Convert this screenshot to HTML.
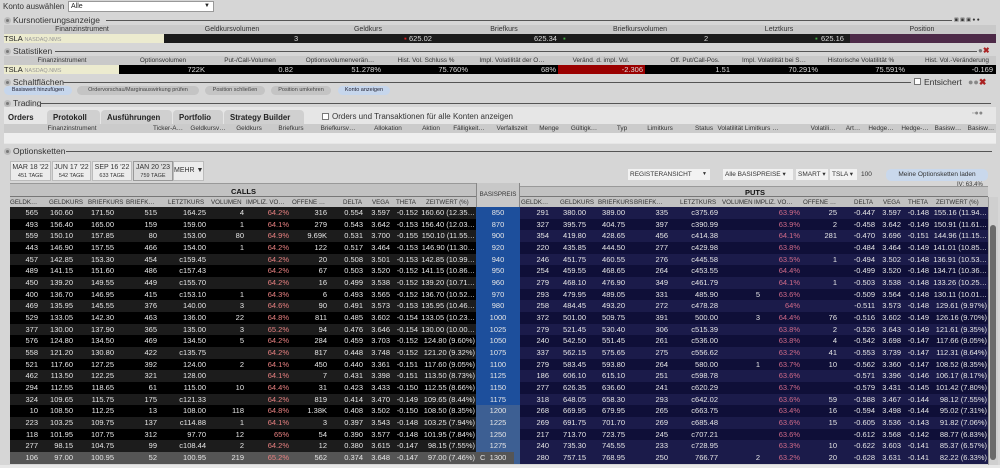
<!DOCTYPE html><html><head><meta charset="utf-8"><style>
*{margin:0;padding:0;box-sizing:border-box}
body{width:1000px;height:468px;overflow:hidden;background:#d6d6d6;font-family:"Liberation Sans",sans-serif;font-size:8px;color:#222;position:relative}
.a{position:absolute;white-space:nowrap}
.t{position:absolute;font-size:8.5px;color:#333;white-space:nowrap}
.t b{display:inline-block;width:7px;height:7px;border-radius:50%;background:#777;border:2px solid #bbb;vertical-align:-1px;margin-right:2px}
.ln{position:absolute;height:1px;background:#555}
.hd{position:absolute;background:#c9c9c9;height:9px;left:4px;width:992px}
.hd span{position:absolute;transform:translateX(-50%);top:0;line-height:9px;color:#333;font-size:7px;white-space:nowrap}
.hd.sm span{font-size:6.4px}
.btn{position:absolute;top:86px;height:9px;border-radius:5px;font-size:5.5px;line-height:9px;text-align:center;color:#444;background:#c4c4c4;white-space:nowrap}
.btn.bl{background:#c6d6ec;color:#223}
.tab{position:absolute;top:110px;height:15px;line-height:15px;font-weight:bold;font-size:7.8px;color:#222;background:#d0d0d0;border-radius:4px 4px 0 0;padding-left:6px;white-space:nowrap}
.et{position:absolute;top:161px;height:20px;background:#ececec;border:1px solid #bbb;text-align:center;font-size:7px;line-height:9px;padding-top:1px;color:#333;white-space:nowrap}
.et i{font-style:normal;font-size:5.5px;display:block;line-height:8px}
#rows{position:absolute;left:10px;top:207px;width:978px}
.r{position:relative;height:11.68px;line-height:11.68px;color:#e6e6e6;font-size:7.5px;background:linear-gradient(to right,#000 0 466px,#1d4f9c 466px 510px,#0f0f38 510px)}
.r.e{background:linear-gradient(to right,#1c1c1c 0 466px,#1d4f9c 466px 510px,#1b1b4a 510px)}
.r.m{background:linear-gradient(to right,#000 0 466px,#3d5f93 466px 510px,#0f0f38 510px)}
.r.m.e{background:linear-gradient(to right,#1c1c1c 0 466px,#3d5f93 466px 510px,#1b1b4a 510px)}
.r.z{background:linear-gradient(to right,#555 0 504px,#3d5f93 504px 510px,#1b1b4a 510px)}
.r span{position:absolute;top:0;text-align:right;overflow:hidden;white-space:nowrap}
.r .s{left:466px;width:44px;text-align:center}
.r .q{color:#e88080}.r .p7{color:#d06a88}
.c1{left:-2px;width:30px}.c2{left:35px;width:28px}.c3{left:70px;width:34px}.c4{left:115px;width:32px}.c5{left:158px;width:38px}.c6{left:205px;width:29px}.c7{left:245px;width:34px}.c8{left:285px;width:32px}.c9{left:325px;width:28px}.c10{left:355px;width:25px}.c11{left:382px;width:26px}.c12{left:409px;width:56px}
.p1{left:515px;width:24px}.p2{left:545px;width:31px}.p3{left:580px;width:35px}.p4{left:630px;width:28px}.p5{left:670px;width:38px}.p6{left:720px;width:30px}.p7{left:760px;width:30px}.p8{left:795px;width:32px}.p9{left:830px;width:35px}.p10{left:867px;width:24px}.p11{left:893px;width:26px}.p12{left:921px;width:56px}
.ch span{position:absolute;top:199px;font-size:6.2px;color:#333;white-space:nowrap;line-height:8px}
</style></head><body>
<div class="a" style="left:3px;top:2px;font-size:8px;color:#333">Konto auswählen</div>
<div class="a" style="left:68px;top:1px;width:146px;height:11px;background:#fff;border:1px solid #999;font-size:7px;line-height:9px;padding-left:2px">Alle<span style="position:absolute;right:3px;font-size:6px">▼</span></div>

<div class="t" style="left:4px;top:15px"><b></b>Kursnotierungsanzeige</div>
<div class="ln" style="left:106px;top:20px;width:846px"></div>
<div class="a" style="left:954px;top:17px;width:42px;height:6px;font-size:5px;color:#333">▣ ▣ ▣ ● ●</div>
<div class="hd" style="top:25px"><span style="left:78px">Finanzinstrument</span><span style="left:228px">Geldkursvolumen</span><span style="left:364px">Geldkurs</span><span style="left:500px">Briefkurs</span><span style="left:636px">Briefkursvolumen</span><span style="left:775px">Letztkurs</span><span style="left:918px">Position</span></div>
<div class="a" style="left:4px;top:34px;width:160px;height:9px;background:#ecebcf;font-size:7.5px;line-height:9px;color:#222">TSLA <span style="font-size:5.5px;color:#999">NASDAQ.NMS</span></div>
<div class="a" style="left:164px;top:34px;width:686px;height:9px;background:#1b1b1b;color:#ddd;line-height:9px;font-size:7.5px">
<span class="a" style="left:130px">3</span><span class="a" style="left:240px;color:#d22">▪</span><span class="a" style="left:245px">625.02</span><span class="a" style="left:370px">625.34</span><span class="a" style="left:399px;color:#4a4">▪</span><span class="a" style="left:540px">2</span><span class="a" style="left:651px;color:#4a4">▪</span><span class="a" style="left:657px">625.16</span></div>
<div class="a" style="left:850px;top:34px;width:146px;height:9px;background:#4d2a48"></div>

<div class="t" style="left:4px;top:46px"><b></b>Statistiken</div>
<div class="ln" style="left:55px;top:51px;width:922px"></div>
<div class="a" style="left:978px;top:46px;font-size:8px;color:#777">●<span style="color:#a22;font-weight:bold">✖</span></div>
<div class="hd sm" style="top:56px"><span style="left:58px">Finanzinstrument</span><span style="left:159px">Optionsvolumen</span><span style="left:246px">Put-/Call-Volumen</span><span style="left:336px">Optionsvolumenverän…</span><span style="left:422px">Hist. Vol. Schluss %</span><span style="left:508px">Impl. Volatilität der O…</span><span style="left:597px">Veränd. d. impl. Vol.</span><span style="left:691px">Off. Put/Call-Pos.</span><span style="left:770px">Impl. Volatilität bei S…</span><span style="left:857px">Historische Volatilität %</span><span style="left:953px">Hist. Vol.-Veränderung</span></div>
<div class="a" style="left:4px;top:65px;width:115px;height:9px;background:#ecebcf;line-height:9px;font-size:7.5px">TSLA <span style="font-size:5.5px;color:#999">NASDAQ.NMS</span></div>
<div class="a" style="left:119px;top:65px;width:877px;height:9px;background:#000;color:#ddd;line-height:9px;font-size:7.5px">
<span class="a" style="right:791px">722K</span><span class="a" style="right:703px">0.82</span><span class="a" style="right:615px">51.278%</span><span class="a" style="right:528px">75.760%</span><span class="a" style="right:440px">68%</span><span class="a" style="left:439px;width:87px;height:9px;background:#9a0000;text-align:right;padding-right:2px">-2.306</span><span class="a" style="right:266px">1.51</span><span class="a" style="right:178px">70.291%</span><span class="a" style="right:91px">75.591%</span><span class="a" style="right:3px">-0.169</span></div>

<div class="t" style="left:4px;top:77px"><b></b>Schaltflächen</div>
<div class="ln" style="left:63px;top:82px;width:848px"></div>
<div class="a" style="left:914px;top:78px;width:7px;height:7px;background:#fff;border:1px solid #777"></div>
<div class="a" style="left:924px;top:77px;font-size:8.5px;color:#333">Entsichert</div>
<div class="a" style="left:968px;top:77px;font-size:9px;color:#888">●●<span style="color:#a22;font-weight:bold">✖</span></div>
<div class="btn bl" style="left:4px;width:68px">Basiswert hinzufügen</div>
<div class="btn" style="left:77px;width:122px">Ordervorschau/Marginauswirkung prüfen</div>
<div class="btn" style="left:205px;width:60px">Position schließen</div>
<div class="btn" style="left:271px;width:60px">Position umkehren</div>
<div class="btn bl" style="left:338px;width:52px">Konto anzeigen</div>

<div class="t" style="left:4px;top:98px"><b></b>Trading</div>
<div class="ln" style="left:41px;top:103px;width:950px"></div>
<div class="a" style="left:4px;top:107px;width:992px;height:37px;background:#e6e6e6"></div>
<div class="tab" style="left:6px;width:40px;background:#e6e6e6;padding-left:2px">Orders</div>
<div class="tab" style="left:47px;width:53px">Protokoll</div>
<div class="tab" style="left:101px;width:71px">Ausführungen</div>
<div class="tab" style="left:173px;width:50px">Portfolio</div>
<div class="tab" style="left:224px;width:80px">Strategy Builder</div>
<div class="a" style="left:322px;top:113px;width:7px;height:7px;background:#fff;border:1px solid #777"></div>
<div class="a" style="left:332px;top:112px;font-size:8px;color:#333">Orders und Transaktionen für alle Konten anzeigen</div>
<div class="a" style="left:972px;top:110px;font-size:7px;color:#888">▫●●</div>
<div class="hd sm" style="top:124px;background:#cbcbcb"><span style="left:68px">Finanzinstrument</span><span style="left:164px">Ticker-A…</span><span style="left:204px">Geldkursv…</span><span style="left:245px">Geldkurs</span><span style="left:287px">Briefkurs</span><span style="left:334px">Briefkursv…</span><span style="left:384px">Allokation</span><span style="left:427px">Aktion</span><span style="left:465px">Fälligkeit…</span><span style="left:508px">Verfallszeit</span><span style="left:545px">Menge</span><span style="left:580px">Gültigk…</span><span style="left:618px">Typ</span><span style="left:656px">Limitkurs</span><span style="left:700px">Status</span><span style="left:744px">Volatilität Limitkurs …</span><span style="left:819px">Volatili…</span><span style="left:849px">Art…</span><span style="left:877px">Hedge…</span><span style="left:911px">Hedge-…</span><span style="left:944px">Basisw…</span><span style="left:977px">Basisw…</span></div>
<div class="a" style="left:4px;top:133px;width:992px;height:10px;background:#eeeeee"></div>

<div class="t" style="left:4px;top:146px"><b></b>Optionsketten</div>
<div class="ln" style="left:66px;top:151px;width:926px"></div>
<div class="et" style="left:10px;width:41px">MAR 18 '22<i>451 TAGE</i></div>
<div class="et" style="left:52px;width:39px">JUN 17 '22<i>542 TAGE</i></div>
<div class="et" style="left:92px;width:40px">SEP 16 '22<i>633 TAGE</i></div>
<div class="et" style="left:133px;width:40px;background:#dcdcdc;border-color:#999">JAN 20 '23<i>759 TAGE</i></div>
<div class="et" style="left:173px;width:31px;line-height:18px;padding:0">MEHR ▼</div>
<div class="a" style="left:628px;top:169px;width:82px;height:11px;background:#f2f2f2;font-size:6.5px;line-height:11px;padding-left:2px;color:#333">REGISTERANSICHT<span style="position:absolute;right:3px;font-size:5px">▼</span></div>
<div class="a" style="left:723px;top:169px;width:70px;height:11px;background:#f2f2f2;font-size:6.5px;line-height:11px;padding-left:2px;color:#333">Alle BASISPREISE ▾</div>
<div class="a" style="left:796px;top:169px;width:32px;height:11px;background:#f2f2f2;font-size:6.5px;line-height:11px;padding-left:2px;color:#333">SMART ▾</div>
<div class="a" style="left:830px;top:169px;width:27px;height:11px;background:#f2f2f2;font-size:6.5px;line-height:11px;padding-left:2px;color:#333">TSLA ▾</div>
<div class="a" style="left:861px;top:169px;font-size:6.5px;line-height:11px;color:#333">100</div>
<div class="a" style="left:886px;top:169px;width:102px;height:12px;background:#c9d8ec;border-radius:5px;font-size:6.5px;line-height:12px;text-align:center;color:#333">Meine Optionsketten laden</div>
<div class="a" style="left:957px;top:182px;font-size:6px;color:#333">IV: 63.4%</div>

<div class="a" style="left:10px;top:183px;width:466px;height:24px;background:#c2c2c2;border-top:1px solid #999"></div>
<div class="a" style="left:10px;top:196px;width:466px;height:1px;background:#777"></div>
<div class="a" style="left:520px;top:186px;width:468px;height:21px;background:#c2c2c2;border-top:1px solid #999"></div>
<div class="a" style="left:520px;top:196px;width:468px;height:1px;background:#777"></div>
<div class="a" style="left:476px;top:183px;width:44px;height:24px;background:#c8c8c8;border-left:1px solid #888;border-right:1px solid #888;font-size:6.2px;line-height:24px;text-align:center;color:#333">BASISPREIS</div>
<div class="a" style="left:231px;top:187px;font-weight:bold;font-size:7.5px;color:#111">CALLS</div>
<div class="a" style="left:745px;top:188px;font-weight:bold;font-size:7.5px;color:#111">PUTS</div>
<div class="ch">
<span style="left:10px">GELDK…</span><span style="left:49px">GELDKURS</span><span style="left:88px">BRIEFKURS</span><span style="left:126px">BRIEFK…</span><span style="left:168px">LETZTKURS</span><span style="left:211px">VOLUMEN</span><span style="left:246px">IMPLIZ. VO…</span><span style="left:292px">OFFENE …</span><span style="left:343px">DELTA</span><span style="left:372px">VEGA</span><span style="left:396px">THETA</span><span style="left:426px">ZEITWERT (%)</span>
<span style="left:521px">GELDK…</span><span style="left:560px">GELDKURS</span><span style="left:598px">BRIEFKURS</span><span style="left:634px">BRIEFK…</span><span style="left:680px">LETZTKURS</span><span style="left:722px">VOLUMEN</span><span style="left:754px">IMPLIZ. VO…</span><span style="left:803px">OFFENE …</span><span style="left:854px">DELTA</span><span style="left:883px">VEGA</span><span style="left:908px">THETA</span><span style="left:936px">ZEITWERT (%)</span></div>

<div id="rows">
<div class="r e"><span class="c1">565</span><span class="c2">160.60</span><span class="c3">171.50</span><span class="c4">515</span><span class="c5">164.25</span><span class="c6">4</span><span class="c7 q">64.2%</span><span class="c8">316</span><span class="c9">0.554</span><span class="c10">3.597</span><span class="c11">-0.152</span><span class="c12">160.60 (12.35…</span><span class="s">850</span><span class="p1">291</span><span class="p2">380.00</span><span class="p3">389.00</span><span class="p4">335</span><span class="p5">c375.69</span><span class="p6"></span><span class="p7">63.9%</span><span class="p8">25</span><span class="p9">-0.447</span><span class="p10">3.597</span><span class="p11">-0.148</span><span class="p12">155.16 (11.94…</span></div>
<div class="r"><span class="c1">493</span><span class="c2">156.40</span><span class="c3">165.00</span><span class="c4">159</span><span class="c5">159.00</span><span class="c6">1</span><span class="c7 q">64.1%</span><span class="c8">279</span><span class="c9">0.543</span><span class="c10">3.642</span><span class="c11">-0.153</span><span class="c12">156.40 (12.03…</span><span class="s">870</span><span class="p1">327</span><span class="p2">395.75</span><span class="p3">404.75</span><span class="p4">397</span><span class="p5">c390.99</span><span class="p7">63.9%</span><span class="p8">2</span><span class="p9">-0.458</span><span class="p10">3.642</span><span class="p11">-0.149</span><span class="p12">150.91 (11.61…</span></div>
<div class="r e"><span class="c1">559</span><span class="c2">150.10</span><span class="c3">157.85</span><span class="c4">80</span><span class="c5">153.00</span><span class="c6">80</span><span class="c7 q">64.9%</span><span class="c8">9.69K</span><span class="c9">0.531</span><span class="c10">3.700</span><span class="c11">-0.155</span><span class="c12">150.10 (11.55…</span><span class="s">900</span><span class="p1">354</span><span class="p2">419.80</span><span class="p3">428.65</span><span class="p4">456</span><span class="p5">c414.38</span><span class="p7">64.1%</span><span class="p8">281</span><span class="p9">-0.470</span><span class="p10">3.696</span><span class="p11">-0.151</span><span class="p12">144.96 (11.15…</span></div>
<div class="r"><span class="c1">443</span><span class="c2">146.90</span><span class="c3">157.55</span><span class="c4">466</span><span class="c5">154.00</span><span class="c6">1</span><span class="c7 q">64.2%</span><span class="c8">122</span><span class="c9">0.517</span><span class="c10">3.464</span><span class="c11">-0.153</span><span class="c12">146.90 (11.30…</span><span class="s">920</span><span class="p1">220</span><span class="p2">435.85</span><span class="p3">444.50</span><span class="p4">277</span><span class="p5">c429.98</span><span class="p7">63.8%</span><span class="p9">-0.484</span><span class="p10">3.464</span><span class="p11">-0.149</span><span class="p12">141.01 (10.85…</span></div>
<div class="r e"><span class="c1">457</span><span class="c2">142.85</span><span class="c3">153.30</span><span class="c4">454</span><span class="c5">c159.45</span><span class="c7 q">64.2%</span><span class="c8">20</span><span class="c9">0.508</span><span class="c10">3.501</span><span class="c11">-0.153</span><span class="c12">142.85 (10.99…</span><span class="s">940</span><span class="p1">246</span><span class="p2">451.75</span><span class="p3">460.55</span><span class="p4">276</span><span class="p5">c445.58</span><span class="p7">63.5%</span><span class="p8">1</span><span class="p9">-0.494</span><span class="p10">3.502</span><span class="p11">-0.148</span><span class="p12">136.91 (10.53…</span></div>
<div class="r"><span class="c1">489</span><span class="c2">141.15</span><span class="c3">151.60</span><span class="c4">486</span><span class="c5">c157.43</span><span class="c7 q">64.2%</span><span class="c8">67</span><span class="c9">0.503</span><span class="c10">3.520</span><span class="c11">-0.152</span><span class="c12">141.15 (10.86…</span><span class="s">950</span><span class="p1">254</span><span class="p2">459.55</span><span class="p3">468.65</span><span class="p4">264</span><span class="p5">c453.55</span><span class="p7">64.4%</span><span class="p9">-0.499</span><span class="p10">3.520</span><span class="p11">-0.148</span><span class="p12">134.71 (10.36…</span></div>
<div class="r e"><span class="c1">450</span><span class="c2">139.20</span><span class="c3">149.55</span><span class="c4">449</span><span class="c5">c155.70</span><span class="c7 q">64.2%</span><span class="c8">16</span><span class="c9">0.499</span><span class="c10">3.538</span><span class="c11">-0.152</span><span class="c12">139.20 (10.71…</span><span class="s">960</span><span class="p1">279</span><span class="p2">468.10</span><span class="p3">476.90</span><span class="p4">349</span><span class="p5">c461.79</span><span class="p7">64.1%</span><span class="p8">1</span><span class="p9">-0.503</span><span class="p10">3.538</span><span class="p11">-0.148</span><span class="p12">133.26 (10.25…</span></div>
<div class="r"><span class="c1">400</span><span class="c2">136.70</span><span class="c3">146.95</span><span class="c4">415</span><span class="c5">c153.10</span><span class="c6">1</span><span class="c7 q">64.3%</span><span class="c8">6</span><span class="c9">0.493</span><span class="c10">3.565</span><span class="c11">-0.152</span><span class="c12">136.70 (10.52…</span><span class="s">970</span><span class="p1">293</span><span class="p2">479.95</span><span class="p3">489.05</span><span class="p4">331</span><span class="p5">485.90</span><span class="p6">5</span><span class="p7">63.6%</span><span class="p9">-0.509</span><span class="p10">3.564</span><span class="p11">-0.148</span><span class="p12">130.11 (10.01…</span></div>
<div class="r e"><span class="c1">469</span><span class="c2">135.95</span><span class="c3">145.55</span><span class="c4">376</span><span class="c5">140.00</span><span class="c6">3</span><span class="c7 q">64.6%</span><span class="c8">90</span><span class="c9">0.491</span><span class="c10">3.573</span><span class="c11">-0.153</span><span class="c12">135.95 (10.46…</span><span class="s">980</span><span class="p1">258</span><span class="p2">484.45</span><span class="p3">493.20</span><span class="p4">272</span><span class="p5">c478.28</span><span class="p7">64%</span><span class="p9">-0.511</span><span class="p10">3.573</span><span class="p11">-0.148</span><span class="p12">129.61 (9.97%)</span></div>
<div class="r"><span class="c1">529</span><span class="c2">133.05</span><span class="c3">142.30</span><span class="c4">463</span><span class="c5">136.00</span><span class="c6">22</span><span class="c7 q">64.8%</span><span class="c8">811</span><span class="c9">0.485</span><span class="c10">3.602</span><span class="c11">-0.154</span><span class="c12">133.05 (10.23…</span><span class="s">1000</span><span class="p1">372</span><span class="p2">501.00</span><span class="p3">509.75</span><span class="p4">391</span><span class="p5">500.00</span><span class="p6">3</span><span class="p7">64.4%</span><span class="p8">76</span><span class="p9">-0.516</span><span class="p10">3.602</span><span class="p11">-0.149</span><span class="p12">126.16 (9.70%)</span></div>
<div class="r e"><span class="c1">377</span><span class="c2">130.00</span><span class="c3">137.90</span><span class="c4">365</span><span class="c5">135.00</span><span class="c6">3</span><span class="c7 q">65.2%</span><span class="c8">94</span><span class="c9">0.476</span><span class="c10">3.646</span><span class="c11">-0.154</span><span class="c12">130.00 (10.00…</span><span class="s">1025</span><span class="p1">279</span><span class="p2">521.45</span><span class="p3">530.40</span><span class="p4">306</span><span class="p5">c515.39</span><span class="p7">63.8%</span><span class="p8">2</span><span class="p9">-0.526</span><span class="p10">3.643</span><span class="p11">-0.149</span><span class="p12">121.61 (9.35%)</span></div>
<div class="r"><span class="c1">576</span><span class="c2">124.80</span><span class="c3">134.50</span><span class="c4">469</span><span class="c5">134.50</span><span class="c6">5</span><span class="c7 q">64.2%</span><span class="c8">284</span><span class="c9">0.459</span><span class="c10">3.703</span><span class="c11">-0.152</span><span class="c12">124.80 (9.60%)</span><span class="s">1050</span><span class="p1">240</span><span class="p2">542.50</span><span class="p3">551.45</span><span class="p4">261</span><span class="p5">c536.00</span><span class="p7">63.8%</span><span class="p8">4</span><span class="p9">-0.542</span><span class="p10">3.698</span><span class="p11">-0.147</span><span class="p12">117.66 (9.05%)</span></div>
<div class="r e"><span class="c1">558</span><span class="c2">121.20</span><span class="c3">130.80</span><span class="c4">422</span><span class="c5">c135.75</span><span class="c7 q">64.2%</span><span class="c8">817</span><span class="c9">0.448</span><span class="c10">3.748</span><span class="c11">-0.152</span><span class="c12">121.20 (9.32%)</span><span class="s">1075</span><span class="p1">337</span><span class="p2">562.15</span><span class="p3">575.65</span><span class="p4">275</span><span class="p5">c556.62</span><span class="p7">63.2%</span><span class="p8">41</span><span class="p9">-0.553</span><span class="p10">3.739</span><span class="p11">-0.147</span><span class="p12">112.31 (8.64%)</span></div>
<div class="r"><span class="c1">521</span><span class="c2">117.60</span><span class="c3">127.25</span><span class="c4">392</span><span class="c5">124.00</span><span class="c6">2</span><span class="c7 q">64.1%</span><span class="c8">450</span><span class="c9">0.440</span><span class="c10">3.361</span><span class="c11">-0.151</span><span class="c12">117.60 (9.05%)</span><span class="s">1100</span><span class="p1">279</span><span class="p2">583.45</span><span class="p3">593.80</span><span class="p4">264</span><span class="p5">580.00</span><span class="p6">1</span><span class="p7">63.7%</span><span class="p8">10</span><span class="p9">-0.562</span><span class="p10">3.360</span><span class="p11">-0.147</span><span class="p12">108.52 (8.35%)</span></div>
<div class="r e"><span class="c1">462</span><span class="c2">113.50</span><span class="c3">122.25</span><span class="c4">321</span><span class="c5">128.00</span><span class="c7 q">64.1%</span><span class="c8">7</span><span class="c9">0.431</span><span class="c10">3.398</span><span class="c11">-0.151</span><span class="c12">113.50 (8.73%)</span><span class="s">1125</span><span class="p1">186</span><span class="p2">606.10</span><span class="p3">615.10</span><span class="p4">251</span><span class="p5">c598.78</span><span class="p7">63.6%</span><span class="p9">-0.571</span><span class="p10">3.396</span><span class="p11">-0.146</span><span class="p12">106.17 (8.17%)</span></div>
<div class="r"><span class="c1">294</span><span class="c2">112.55</span><span class="c3">118.65</span><span class="c4">61</span><span class="c5">115.00</span><span class="c6">10</span><span class="c7 q">64.4%</span><span class="c8">31</span><span class="c9">0.423</span><span class="c10">3.433</span><span class="c11">-0.150</span><span class="c12">112.55 (8.66%)</span><span class="s">1150</span><span class="p1">277</span><span class="p2">626.35</span><span class="p3">636.60</span><span class="p4">241</span><span class="p5">c620.29</span><span class="p7">63.7%</span><span class="p9">-0.579</span><span class="p10">3.431</span><span class="p11">-0.145</span><span class="p12">101.42 (7.80%)</span></div>
<div class="r e"><span class="c1">324</span><span class="c2">109.65</span><span class="c3">115.75</span><span class="c4">175</span><span class="c5">c121.33</span><span class="c7 q">64.2%</span><span class="c8">819</span><span class="c9">0.414</span><span class="c10">3.470</span><span class="c11">-0.149</span><span class="c12">109.65 (8.44%)</span><span class="s">1175</span><span class="p1">318</span><span class="p2">648.05</span><span class="p3">658.30</span><span class="p4">293</span><span class="p5">c642.02</span><span class="p7">63.6%</span><span class="p8">59</span><span class="p9">-0.588</span><span class="p10">3.467</span><span class="p11">-0.144</span><span class="p12">98.12 (7.55%)</span></div>
<div class="r m"><span class="c1">10</span><span class="c2">108.50</span><span class="c3">112.25</span><span class="c4">13</span><span class="c5">108.00</span><span class="c6">118</span><span class="c7 q">64.8%</span><span class="c8">1.38K</span><span class="c9">0.408</span><span class="c10">3.502</span><span class="c11">-0.150</span><span class="c12">108.50 (8.35%)</span><span class="s">1200</span><span class="p1">268</span><span class="p2">669.95</span><span class="p3">679.95</span><span class="p4">265</span><span class="p5">c663.75</span><span class="p7">63.4%</span><span class="p8">16</span><span class="p9">-0.594</span><span class="p10">3.498</span><span class="p11">-0.144</span><span class="p12">95.02 (7.31%)</span></div>
<div class="r m e"><span class="c1">223</span><span class="c2">103.25</span><span class="c3">109.75</span><span class="c4">137</span><span class="c5">c114.88</span><span class="c6">1</span><span class="c7 q">64.1%</span><span class="c8">3</span><span class="c9">0.397</span><span class="c10">3.543</span><span class="c11">-0.148</span><span class="c12">103.25 (7.94%)</span><span class="s">1225</span><span class="p1">269</span><span class="p2">691.75</span><span class="p3">701.70</span><span class="p4">269</span><span class="p5">c685.48</span><span class="p7">63.6%</span><span class="p8">15</span><span class="p9">-0.605</span><span class="p10">3.536</span><span class="p11">-0.143</span><span class="p12">91.82 (7.06%)</span></div>
<div class="r m"><span class="c1">118</span><span class="c2">101.95</span><span class="c3">107.75</span><span class="c4">312</span><span class="c5">97.70</span><span class="c6">12</span><span class="c7 q">65%</span><span class="c8">54</span><span class="c9">0.390</span><span class="c10">3.577</span><span class="c11">-0.148</span><span class="c12">101.95 (7.84%)</span><span class="s">1250</span><span class="p1">217</span><span class="p2">713.70</span><span class="p3">723.75</span><span class="p4">245</span><span class="p5">c707.21</span><span class="p7">63.6%</span><span class="p9">-0.612</span><span class="p10">3.568</span><span class="p11">-0.142</span><span class="p12">88.77 (6.83%)</span></div>
<div class="r m e"><span class="c1">277</span><span class="c2">98.15</span><span class="c3">104.75</span><span class="c4">99</span><span class="c5">c108.44</span><span class="c6">2</span><span class="c7 q">64.2%</span><span class="c8">12</span><span class="c9">0.380</span><span class="c10">3.615</span><span class="c11">-0.147</span><span class="c12">98.15 (7.55%)</span><span class="s">1275</span><span class="p1">240</span><span class="p2">735.30</span><span class="p3">745.55</span><span class="p4">233</span><span class="p5">c728.95</span><span class="p7">63.3%</span><span class="p8">10</span><span class="p9">-0.622</span><span class="p10">3.603</span><span class="p11">-0.141</span><span class="p12">85.37 (6.57%)</span></div>
<div class="r z"><span class="c1">106</span><span class="c2">97.00</span><span class="c3">100.95</span><span class="c4">52</span><span class="c5">100.95</span><span class="c6">219</span><span class="c7 q">65.2%</span><span class="c8">562</span><span class="c9">0.374</span><span class="c10">3.648</span><span class="c11">-0.147</span><span class="c12">97.00 (7.46%)</span><span style="left:470px;width:8px;text-align:left">C</span><span class="s">1300</span><span class="p1">280</span><span class="p2">757.15</span><span class="p3">768.95</span><span class="p4">250</span><span class="p5">766.77</span><span class="p6">2</span><span class="p7">63.2%</span><span class="p8">20</span><span class="p9">-0.628</span><span class="p10">3.631</span><span class="p11">-0.141</span><span class="p12">82.22 (6.33%)</span></div>
</div>
<div class="a" style="left:988px;top:197px;width:10px;height:268px;background:#cfcfcf;border-left:1px solid #999"></div>
<div class="a" style="left:990px;top:225px;width:6px;height:235px;background:#6a6a6a;border-radius:3px"></div>
<div class="a" style="left:0;top:465px;width:1000px;height:3px;background:#e8e8e8"></div>
</body></html>
